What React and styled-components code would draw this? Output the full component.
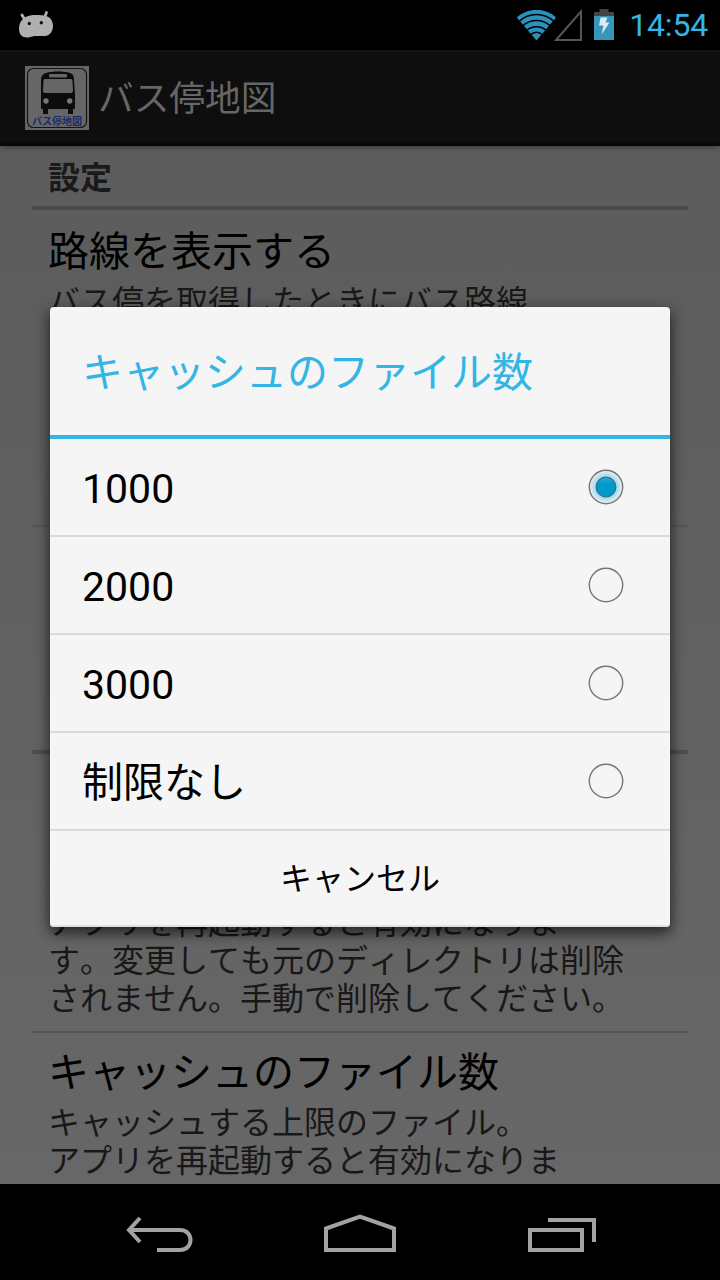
import React from "react";
import styled, { createGlobalStyle } from "styled-components";

const GlobalStyle = createGlobalStyle`
  * { box-sizing: border-box; }
  body {
    margin: 0;
    background: #000;
    font-family: Roboto, "Noto Sans CJK JP", sans-serif;
    font-kerning: none;
    text-spacing-trim: space-all;
  }
`;

const Screen = styled.div`
  position: relative;
  display: flex;
  flex-direction: column;
  width: 720px;
  height: 1280px;
  overflow: hidden;
  background: #000;
`;

const StatusBar = styled.header`
  display: flex;
  align-items: center;
  justify-content: space-between;
  flex: none;
  height: 50px;
  padding: 0 12px 0 16px;
`;

const StatusIcons = styled.div`
  display: flex;
  align-items: center;
`;

const Clock = styled.span`
  margin-left: 15px;
  padding-top: 1px;
  color: #33b5e5;
  font-size: 32px;
  line-height: 49px;
  letter-spacing: -0.2px;
`;

const ActionBar = styled.div`
  position: relative;
  z-index: 1;
  display: flex;
  align-items: center;
  gap: 9px;
  flex: none;
  height: 96px;
  padding: 0 25px;
  background: linear-gradient(#121212 0 2px, #0e0e0e 2px 92px, #080808 94px);
  box-shadow: 0 1px 5px rgba(0, 0, 0, 0.45);
`;

const AppIcon = styled.div`
  display: grid;
  width: 64px;
  height: 64px;
  > * { grid-area: 1 / 1; }
`;

const AppIconLabel = styled.span`
  align-self: end;
  justify-self: center;
  padding-bottom: 2px;
  color: #142e6c;
  font-size: 10px;
  font-weight: 700;
  line-height: 13px;
  white-space: nowrap;
`;

const AppTitle = styled.h1`
  margin: 0;
  padding-top: 2px;
  color: #666;
  font-size: 35.7px;
  font-weight: 400;
  line-height: 48px;
  white-space: nowrap;
`;

const SettingsList = styled.main`
  flex: none;
  height: 1038px;
  padding: 0 32px;
  overflow: hidden;
  background: linear-gradient(#5c5c5c, #676767);
`;

const CategoryHeader = styled.h2`
  height: 64px;
  margin: 0;
  padding: 3px 16px 0;
  border-bottom: 4px solid #4b4b4b;
  color: #1a1a1a;
  font-size: 32px;
  font-weight: 700;
  line-height: 58px;
`;

const Preference = styled.section`
  display: flex;
  flex-direction: column;
  justify-content: ${(p) => (p.$bottom ? "flex-end" : "flex-start")};
  height: ${(p) => p.$height}px;
  padding: ${(p) => p.$top ?? 16}px 16px 13px;
  border-bottom: ${(p) => (p.$section ? "4px solid #4e4e4e" : "2px solid #565656")};
`;

const PreferenceTitle = styled.h3`
  flex: none;
  margin: 0 0 7px;
  color: #000;
  font-size: 41px;
  font-weight: 400;
  line-height: 48px;
  white-space: nowrap;
`;

const PreferenceSummary = styled.p`
  flex: none;
  margin: 0;
  color: #181818;
  font-size: 32px;
  line-height: 38px;
  white-space: pre;
`;

const DialogLayer = styled.div`
  position: absolute;
  inset: 50px 0 96px;
  z-index: 2;
  display: flex;
  align-items: center;
  justify-content: center;
`;

const Dialog = styled.div`
  display: flex;
  flex-direction: column;
  width: 620px;
  height: 620px;
  border-radius: 4px;
  background: #f5f5f5;
  box-shadow: 0 5px 14px 1px rgba(0, 0, 0, 0.65), inset 0 -2px 0 #dfe1e1;
`;

const DialogTitle = styled.h2`
  height: 132px;
  margin: 0;
  padding: 2px 32px 0;
  border-bottom: 4px solid #33b5e5;
  color: #33b5e5;
  font-size: 41px;
  font-weight: 400;
  line-height: 128px;
  white-space: nowrap;
`;

const Choice = styled.label`
  display: flex;
  align-items: center;
  justify-content: space-between;
  height: 98px;
  padding: 0 46px 0 32px;
  border-bottom: 2px solid #d9d9d9;
`;

const ChoiceText = styled.span`
  padding-top: 4px;
  color: #000;
  font-size: 41px;
  line-height: 92px;
`;

const CancelButton = styled.button`
  height: 96px;
  padding: 0;
  border: 0;
  background: transparent;
  color: #000;
  font: inherit;
  font-kerning: none;
  font-size: 32px;
  line-height: 96px;
`;

const NavigationBar = styled.nav`
  display: flex;
  align-items: center;
  justify-content: space-between;
  flex: none;
  height: 96px;
  padding: 0 116px 0 120px;
`;

const Icon = styled.svg`
  display: block;
  flex: none;
  overflow: visible;
`;

const Mascot = () => (
  <Icon width="40" height="32" viewBox="16 9 40 32">
    <path d="M22 15l3 5M46.500 12.500l-2 5" stroke="#b0b0b0" strokeWidth="2.800" strokeLinecap="round" />
    <path d="M36 15c-7 0-11 1.500-14 5-2 2-3 5-3 9 0 5 3 8.500 8 8.500 4 0 5-1.500 9-1.500h9c5-.5 8-5 8-10 0-4-2-8-5.500-9.500C44 15 40 15 36 15z" fill="#b0b0b0" />
    <circle cx="29.300" cy="23.500" r="1.700" fill="#111" />
    <circle cx="41.300" cy="22.700" r="1.700" fill="#111" />
    <path d="M33.500 28.500v3M37 28h3" stroke="#999" strokeWidth=".7" strokeDasharray="1 1" />
  </Icon>
);

const Wifi = () => (
  <Icon width="38" height="50" viewBox="516 0 38 50">
    <path d="M516.800 17.500C522 12.500 529 10 536.500 10s14.500 2.500 19.500 7.500L536.500 40.500z" fill="#2b93bb" />
    <g fill="none" stroke="#000" strokeWidth="1.500">
      <path d="M519 21.500c10-9.300 25-9.300 35 0" />
      <path d="M522.500 26c8-7.500 20-7.500 28 0" />
      <path d="M526.500 30.500c5.500-5 14.500-5 20 0" />
      <path d="M530 35c4-3.500 9-3.500 13 0" />
    </g>
  </Icon>
);

const Signal = () => (
  <Icon width="28" height="50" viewBox="554 0 28 50">
    <path d="M581 11.500V40h-25z" fill="none" stroke="#555" strokeWidth="2" />
  </Icon>
);

const BatteryIcon = styled(Icon)`
  margin-left: 12px;
`;

const Battery = () => (
  <BatteryIcon width="20" height="50" viewBox="594 0 20 50">
    <path d="M599.500 9h9v3h5.500v4h-20v-4h5.500z" fill="#444" />
    <path d="M594 16h20v24h-20z" fill="#3896bb" />
    <path d="M600.500 17.500h7l-2 5h4l-8 12 2-9h-4.500z" fill="#dcebf1" />
  </BatteryIcon>
);

const BusSign = () => (
  <Icon width="64" height="64" viewBox="0 0 64 64">
    <path fill="#666" d="M0 0h64v64H0z" />
    <rect x="2.500" y="2.500" width="59" height="59" rx="6" fill="none" stroke="#151515" strokeWidth="1.200" />
    <path d="M16 14c0-4 2-6 5-7 7-2 17-2 24 0 3 1 4 3 4 7l1 15v14h-2v5h-5v-5H23v5h-5v-5h-2V29z" fill="#0d0b0b" />
    <rect x="24" y="8" width="18" height="3.500" rx="1.200" fill="#666" />
    <path d="M20 13h26q1.500 0 1.500 2l.5 10q0 2-2 2H20q-2 0-2-2l.5-10q0-2 1.500-2z" fill="#666" />
    <circle cx="21" cy="35" r="2.700" fill="#777" />
    <circle cx="44.700" cy="35" r="2.700" fill="#777" />
  </Icon>
);

const Radio = ({ checked }) => (
  <Icon width="36" height="36" viewBox="0 0 36 36">
    <defs>
      <radialGradient id="glow">
        <stop offset=".55" stopColor="#8fd0e6" />
        <stop offset="1" stopColor="#edf3f5" />
      </radialGradient>
      <linearGradient id="dot" x2="0" y2="1">
        <stop offset="0" stopColor="#2fabd6" />
        <stop offset=".35" stopColor="#0099cc" />
      </linearGradient>
    </defs>
    <circle cx="18" cy="18" r="16.700" fill={checked ? "url(#glow)" : "none"} stroke="#777" strokeWidth="1.400" />
    {checked && <circle cx="18" cy="18" r="9.800" fill="url(#dot)" stroke="#28718a" strokeWidth="1.200" />}
  </Icon>
);

const NavIcon = ({ d }) => (
  <Icon width="80" height="48" viewBox="0 0 80 48">
    <path d={d} fill="none" stroke="#a3a3a3" strokeWidth="4" />
  </Icon>
);

const choices = ["1000", "2000", "3000", "制限なし"];

export default function App() {
  return (
    <Screen>
      <GlobalStyle />
      <StatusBar>
        <Mascot />
        <StatusIcons>
          <Wifi />
          <Signal />
          <Battery />
          <Clock>14:54</Clock>
        </StatusIcons>
      </StatusBar>
      <ActionBar>
        <AppIcon>
          <BusSign />
          <AppIconLabel>バス停地図</AppIconLabel>
        </AppIcon>
        <AppTitle>バス停地図</AppTitle>
      </ActionBar>
      <SettingsList>
        <CategoryHeader>設定</CategoryHeader>
        <Preference $height={317} $top={18}>
          <PreferenceTitle>路線を表示する</PreferenceTitle>
          <PreferenceSummary>バス停を取得したときにバス路線</PreferenceSummary>
        </Preference>
        <Preference $height={227} $section />
        <Preference $height={279} $bottom>
          <PreferenceSummary>
            {"アプリを再起動すると有効になりま\nす。変更しても元のディレクトリは削除\nされません。手動で削除してください。"}
          </PreferenceSummary>
        </Preference>
        <Preference $height={190}>
          <PreferenceTitle>キャッシュのファイル数</PreferenceTitle>
          <PreferenceSummary>
            {"キャッシュする上限のファイル。\nアプリを再起動すると有効になりま"}
          </PreferenceSummary>
        </Preference>
      </SettingsList>
      <NavigationBar>
        <NavIcon d="M20 10L9 22l11 12M9 22H60c14 0 14 20 0 20H37" />
        <NavIcon d="M4 42V20.500L38 8.500l34 12V42z" />
        <NavIcon d="M6 22h52v20H6zM24 12h46v22" />
      </NavigationBar>
      <DialogLayer>
        <Dialog role="dialog">
          <DialogTitle>キャッシュのファイル数</DialogTitle>
          {choices.map((label, i) => (
            <Choice key={label}>
              <ChoiceText>{label}</ChoiceText>
              <Radio checked={i === 0} />
            </Choice>
          ))}
          <CancelButton>キャンセル</CancelButton>
        </Dialog>
      </DialogLayer>
    </Screen>
  );
}
